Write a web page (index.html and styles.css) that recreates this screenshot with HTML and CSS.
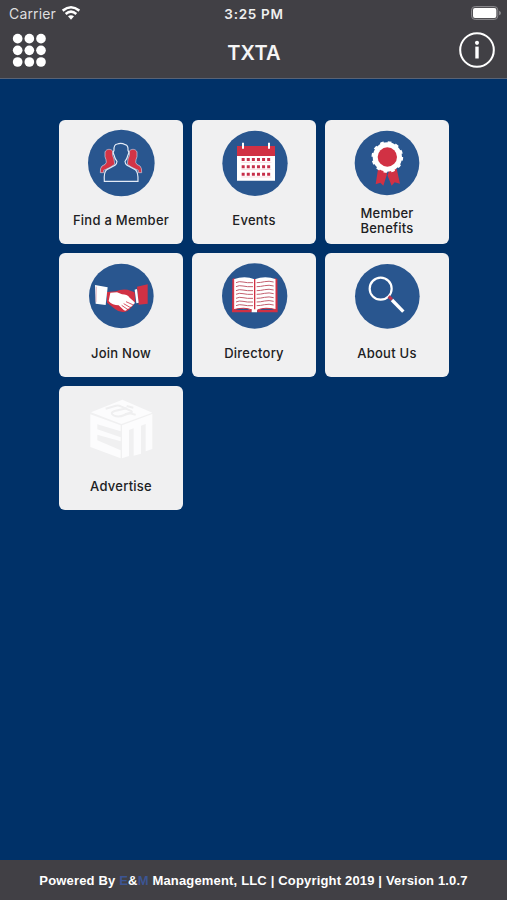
FILE: index.html
```html
<!DOCTYPE html>
<html lang="en">
<head>
<meta charset="utf-8">
<title>TXTA</title>
<link rel="stylesheet" href="styles.css">
</head>
<body>
<header class="header">
  <div class="status">
    <div class="carrier"><span>Carrier</span>
      <svg class="wifi" viewBox="0 0 54 42"><g fill="none" stroke="#fff" stroke-width="7.500"><path d="M2 14Q27-6 52 14"/><path d="M11 24Q27 10 43 24"/></g><path d="M18 31Q27 24 36 31L27 41Z" fill="#fff"/></svg>
    </div>
    <div class="time">3:25 PM</div>
    <svg class="battery" viewBox="0 0 90 42"><rect x="1.5" y="1.5" width="79" height="39" rx="11" fill="#504f53" stroke="#88878b" stroke-width="3"/><rect x="6" y="6" width="70" height="30" rx="6" fill="#fff"/><path d="M84 14q6 2 6 7t-6 7z" fill="#88878b"/></svg>
  </div>
  <div class="navbar">
    <svg class="grid-icon" viewBox="0 0 99 99" fill="#fff"><circle cx="14" cy="14" r="14.500"/><circle cx="49" cy="14" r="14.500"/><circle cx="84" cy="14" r="14.500"/><circle cx="14" cy="49" r="14.500"/><circle cx="49" cy="49" r="14.500"/><circle cx="84" cy="49" r="14.500"/><circle cx="14" cy="84" r="14.500"/><circle cx="49" cy="84" r="14.500"/><circle cx="84" cy="84" r="14.500"/></svg>
    <h1 class="title">TXTA</h1>
    <svg class="info-icon" viewBox="0 0 106 106"><circle cx="53" cy="53" r="49.5" fill="none" stroke="#fff" stroke-width="6"/><circle cx="53" cy="32" r="6" fill="#fff"/><path d="M53 43V78" stroke="#fff" stroke-width="10"/></svg>
  </div>
</header>
<main class="tiles">
  <a class="tile">
    <svg class="icon" viewBox="9 12 372 246"><circle cx="196" cy="141" r="100" fill="#29568f"/>
      <g fill="#d33446" stroke="#c9d6ea" stroke-width="2"><path d="M170 105C164 98 151 98 147 108V122Q151 132 151 139Q150 146 138 150Q132 156 133 170H143V163Q164 155 176 145L174 129Q167 118 170 105Z"/><path d="M220 105C226 98 239 98 243 108V122Q239 132 239 139Q240 146 252 150Q258 156 257 170H247V163Q226 155 214 145L216 129Q223 118 220 105Z"/></g>
      <path d="M145 196Q143 167 152 161L177 148Q183 143 183 136Q177 130 174 117Q169 109 174 103Q173 85 184 84Q195 79 208 86Q217 88 216 103Q221 109 216 117Q213 130 207 136Q207 143 213 148L238 161Q247 167 246 196Z" fill="#29568f" stroke="#e4ebf6" stroke-width="3.5"/></svg>
    <span class="label">Find a Member</span>
  </a>
  <a class="tile">
    <svg class="icon" viewBox="12 12 372 246"><circle cx="201" cy="142" r="98" fill="#29568f"/>
      <path d="M147 119H261V194H147Z" fill="#fff"/><path d="M147 90H261V120H147Z" fill="#d13144"/>
      <path d="M165 80V98M243 80V98" stroke="#fff" stroke-width="6"/>
      <g stroke="#c62e49" stroke-width="9" stroke-dasharray="9 6.3"><path d="M161 130.500H248M161 152H248M161 175H248"/></g>
      <path d="M160 139H250M160 160H250M160 183H250" stroke="#eeb6bf" stroke-width="1.500"/></svg>
    <span class="label">Events</span>
  </a>
  <a class="tile">
    <svg class="icon" viewBox="15 12 372 246"><circle cx="201" cy="141" r="97" fill="#29568f"/>
      <path d="M174 160L167 205L181 200L190 209L201 175L215 209L224 199L240 203L230 158Z" fill="#d13144"/><path d="M198 165L202 180L207 165Z" fill="#29568f"/>
      <circle cx="202" cy="123" r="44" fill="#fff"/><circle cx="202" cy="123" r="44" fill="none" stroke="#fff" stroke-width="7" stroke-dasharray="11 12.040"/><circle cx="202" cy="123" r="29" fill="#d13144"/></svg>
    <span class="label">Member<br>Benefits</span>
  </a>
  <a class="tile">
    <svg class="icon" viewBox="9 9 372 246"><circle cx="196" cy="138" r="97" fill="#29568f"/>
      <path d="M153 126L180 124Q195 116 215 119L236 127L238 155Q222 183 205 186Q190 188 178 178L153 158Z" fill="#d13144"/>
      <path d="M117 105L155 112L149 165L119 161Z" fill="#fff"/><path d="M121 110L120 157" stroke="#d8939f" stroke-width="2"/>
      <path d="M243 110L275 103V161L248 164Z" fill="#d13144"/><path d="M236 119L243 117L248 158L241 160Z" fill="#fff"/>
      <path d="M163 128L183 127L198 133Q213 133 221 143L236 157Q237 164 230 163Q231 171 223 170Q221 178 214 176Q211 185 204 181L188 166Q169 166 158 153Z" fill="#fff"/>
      <path d="M210 155L230 164M203 161L222 172M197 166L213 177" stroke="#d13144" stroke-width="2.500"/></svg>
    <span class="label">Join Now</span>
  </a>
  <a class="tile">
    <svg class="icon" viewBox="12 9 372 246"><circle cx="200" cy="138" r="98" fill="#29568f"/>
      <path d="M133 87L140 84V180H191V187H132ZM268 87L260 84V180H208V187H269Z" fill="#d13144"/>
      <path d="M137 88Q170 76 200 88Q232 76 264 88V179Q232 170 207 181V187H191V181Q169 170 137 179Z" fill="#fff"/>
      <path d="M137 87V179Q169 170 192 180M264 87V179Q232 170 208 180" fill="none" stroke="#d13144" stroke-width="3"/>
      <path d="M200 87V178" stroke="#d13144" stroke-width="4"/>
      <g fill="none" stroke="#c4606f" stroke-width="3"><path id="line" d="M144 98Q153 93 165 96T195 98M206 98Q217 98 230 95T257 96"/><use href="#line" y="12"/><use href="#line" y="24"/><use href="#line" y="35"/><use href="#line" y="47"/><use href="#line" y="58"/><use href="#line" y="69"/></g></svg>
    <span class="label">Directory</span>
  </a>
  <a class="tile">
    <svg class="icon" viewBox="15 9 372 246"><circle cx="202" cy="139" r="97" fill="#29568f"/>
      <circle cx="182" cy="116" r="33" fill="none" stroke="#fff" stroke-width="6.500"/><path d="M206 139L216 149" stroke="#bd3650" stroke-width="9"/><path d="M216 150L250 185" stroke="#fff" stroke-width="10"/></svg>
    <span class="label">About Us</span>
  </a>
  <a class="tile">
    <svg class="icon" viewBox="9 12 372 246"><g fill="#fcfcfd"><path d="M105 91L199 53L289 92L196 126Z"/><path d="M103 97L194 130V148L124 127V142L194 166V178L124 158V175L194 205V229L103 195Z"/><path d="M198 130L289 96V201L269 208V126L255 131V215L233 221V139L219 144V222L198 229Z"/></g>
      <g fill="none" stroke="#efeff0" stroke-width="6"><path d="M149 80L180 71Q188 69 195 73L226 87Q231 91 222 93L207 97"/><path d="M212 72L232 77M212 79L176 87Q160 93 173 100Q187 107 205 99L221 94L239 98"/></g></svg>
    <span class="label">Advertise</span>
  </a>
</main>
<footer class="footer"><span>Powered By <b class="brand">E</b>&amp;<b class="brand">M</b> Management, LLC | Copyright 2019 | Version 1.0.7</span></footer>
</body>
</html>
```
FILE: styles.css
```css
* { box-sizing: border-box; }
body {
  margin: 0;
  height: 900px;
  display: flex;
  flex-direction: column;
  background: #003168;
  color: #fff;
  font-family: Inter, "Liberation Sans", sans-serif;
  overflow: hidden;
}
.header { height: 79px; background: #414045; border-bottom: 1px solid #596375; }
.status {
  height: 27px;
  padding: 0 6px 0 9px;
  display: grid;
  grid-template-columns: 1fr auto 1fr;
  align-items: center;
}
.carrier { display: flex; align-items: center; gap: 6px; font-size: 14px; letter-spacing: 0.15px; color: #dededf; }
.wifi { width: 18px; height: 14px; margin-top: -2px; }
.time { font-size: 13.5px; font-weight: 600; letter-spacing: 0.7px; color: #efefef; padding-right: 2px; }
.battery { width: 30px; height: 14px; justify-self: end; margin-top: -1px; }
.navbar {
  height: 51px;
  padding: 0 12px 0 13px;
  display: grid;
  grid-template-columns: 1fr auto 1fr;
  align-items: center;
}
.grid-icon { width: 33px; height: 33px; margin-top: -5px; overflow: visible; }
.title { margin: 0; padding-top: 0; font-size: 20px; line-height: 24px; font-weight: 600; letter-spacing: 0.2px; color: #f5f5f5; }
.info-icon { width: 36px; height: 36px; justify-self: end; margin-top: -5px; }
.tiles {
  flex: 1;
  padding: 41px 58px 0 59px;
  display: grid;
  grid-template-columns: repeat(3, 124px);
  grid-auto-rows: 124px;
  gap: 9px;
}
.tile {
  display: flex;
  flex-direction: column;
  background: #f0f0f1;
  border-radius: 6px;
  color: #202022;
}
.icon { width: 124px; height: 82px; }
.label {
  height: 37px;
  display: flex;
  align-items: center;
  justify-content: center;
  text-align: center;
  font-size: 13px;
  line-height: 15px;
  font-weight: 450;
  letter-spacing: 0.25px;
}
.footer {
  height: 40px;
  padding-top: 1px;
  background: #414045;
  display: flex;
  align-items: center;
  justify-content: center;
  font: bold 13px/16px "Liberation Sans", Arial, sans-serif;
  letter-spacing: 0.17px;
  white-space: nowrap;
}
.brand { color: #3c5594; }
```
